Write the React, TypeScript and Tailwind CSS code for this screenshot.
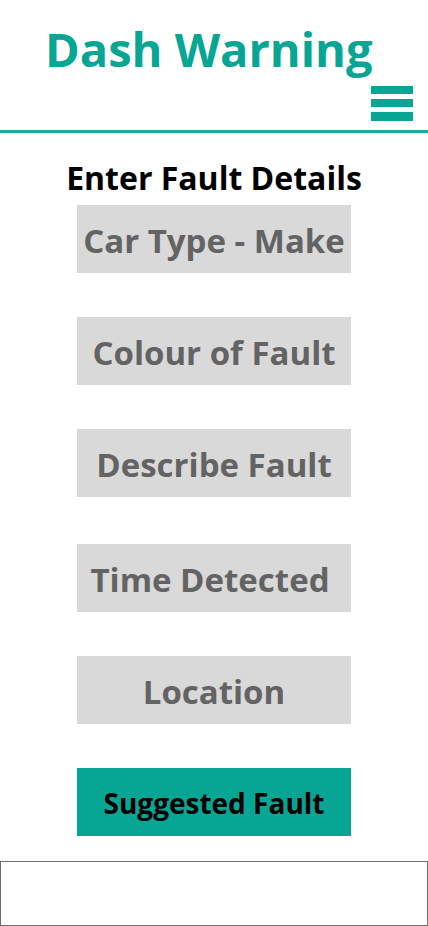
const FIELDS = [
  { label: "Car Type - Make", cls: "" },
  { label: "Colour of Fault", cls: "" },
  { label: "Describe Fault", cls: "" },
  { label: "Time Detected", cls: "mt-[3px] pr-[8px]" },
  { label: "Location", cls: "" },
];

export default function App() {
  return (
    <div className="w-[428px] h-[926px] bg-white flex flex-col font-['Open_Sans',sans-serif]">
      <header className="relative h-[130px]">
        <h1 className="absolute left-[45px] top-[19px] text-[47px] leading-[60px] font-bold text-[#07a594]">
          Dash Warning
        </h1>
        <button className="absolute right-[15px] top-[86px] w-[42px] flex flex-col gap-[5px]" aria-label="Menu">
          <span className="h-[8px] bg-[#07a594]" />
          <span className="h-[8px] bg-[#07a594]" />
          <span className="h-[9px] bg-[#07a594]" />
        </button>
      </header>
      <div className="h-[3px] bg-[#19aa9a]" />

      <main className="flex flex-col items-center">
        <h2 className="mt-[25px] text-[32px] leading-[40px] font-bold text-black">
          Enter Fault Details
        </h2>
        <div className="mt-[7px] flex flex-col gap-[44px]">
          {FIELDS.map((f) => (
            <div
              key={f.label}
              className={`w-[274px] h-[68px] pt-[3px] bg-[#d9d9d9] flex items-center justify-center text-[33px] font-bold text-[#636363] ${f.cls}`}
            >
              {f.label}
            </div>
          ))}
          <button className="w-[274px] h-[68px] pt-[2px] bg-[#07a594] flex items-center justify-center text-[28px] font-bold text-black">
            Suggested Fault
          </button>
        </div>
        <div className="mt-[25px] w-[428px] h-[65px] border border-[#6d6d6d]" />
      </main>
    </div>
  );
}
